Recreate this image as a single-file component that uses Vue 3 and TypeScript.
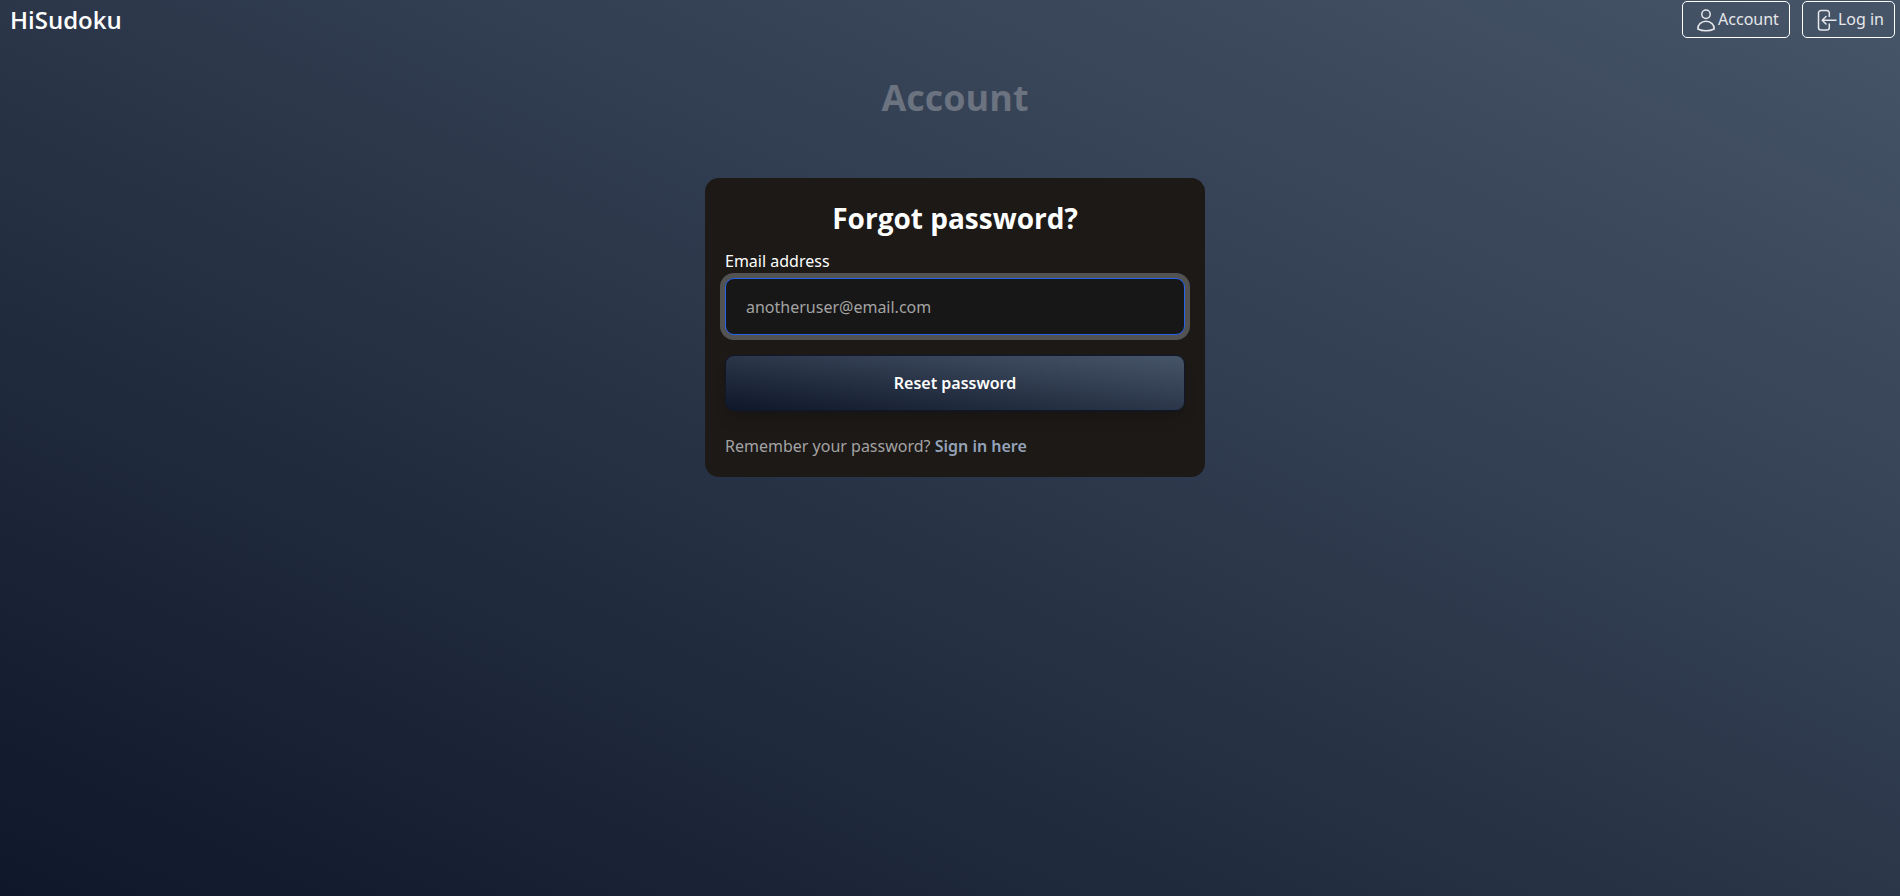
<script setup lang="ts">
import { ref } from 'vue'

const email = ref<string>('')

function resetPassword(): void {
  email.value = email.value.trim()
}
</script>

<template>
  <div class="page">
    <header class="bar">
      <a class="brand" href="#home">HiSudoku</a>
      <nav class="actions">
        <button type="button" class="nav-button">
          <svg class="icon" viewBox="0 0 24 24" aria-hidden="true">
            <circle cx="12" cy="6.2" r="4.2" />
            <path d="M3.800 21C3.600 17 7 13.300 12 13.300s8.400 3.700 8.200 7.700C17.700 22.200 15 22.800 12 22.800s-5.700-.6-8.200-1.800z" />
          </svg>
          Account
        </button>
        <button type="button" class="nav-button">
          <svg class="icon" viewBox="0 0 24 24" aria-hidden="true">
            <path d="M15.300 8.500V5A2.500 2.500 0 0 0 12.800 2.500H7A2.500 2.500 0 0 0 4.500 5v14.500A2.500 2.500 0 0 0 7 22h5.800a2.500 2.500 0 0 0 2.500-2.500V16" />
            <path d="M22 12.300H8.500M12 8.500l-3.800 3.800L12 16" />
          </svg>
          Log in
        </button>
      </nav>
    </header>

    <main class="content">
      <h1 class="title">Account</h1>
      <section class="card">
        <h2 class="heading">Forgot password?</h2>
        <form class="form" @submit.prevent="resetPassword">
          <label class="label" for="email">Email address</label>
          <input id="email" v-model="email" class="field" type="email" placeholder="anotheruser@email.com" />
          <button type="submit" class="submit">Reset password</button>
        </form>
        <p class="hint">Remember your password? <a class="link" href="#login">Sign in here</a></p>
      </section>
    </main>
  </div>
</template>

<style>
body {
  margin: 0;
}
</style>

<style scoped>
.page {
  min-height: 100vh;
  box-sizing: border-box;
  background: linear-gradient(to top right, #0f172a, #475569);
  color: #fff;
  font-family: "Segoe UI", "Noto Sans", "Open Sans", sans-serif;
  font-size: 16px;
  line-height: 26px;
}

.bar {
  display: flex;
  align-items: center;
  justify-content: space-between;
  padding: 1px 5px 0 10px;
}

.brand {
  color: #fff;
  font-family: "Segoe UI", "Open Sans", sans-serif;
  font-size: 24px;
  font-weight: 600;
  text-decoration: none;
}

.actions {
  display: flex;
  gap: 12px;
}

.nav-button {
  display: flex;
  align-items: center;
  padding: 5px 10px 5px 11px;
  border: 1px solid #fff;
  border-radius: 5px;
  background: transparent;
  color: #e5e7eb;
  font: inherit;
  line-height: 25px;
}

.icon {
  width: 24px;
  height: 24px;
  fill: none;
  stroke: currentColor;
  stroke-width: 1.5;
  stroke-linecap: round;
  stroke-linejoin: round;
}

.content {
  display: flex;
  flex-direction: column;
  align-items: center;
  padding: 36px 0 36px 10px;
}

.title {
  margin: 0 0 56px;
  color: #6b7280;
  font-family: "Segoe UI", "Open Sans", sans-serif;
  font-size: 36px;
  font-weight: 700;
  line-height: 48px;
}

.card {
  box-sizing: border-box;
  width: 100%;
  max-width: 500px;
  padding: 20px 20px 18px;
  border-radius: 14px;
  background: #1c1917;
}

.heading {
  margin: 0 0 10px;
  font-family: "Segoe UI", "Open Sans", sans-serif;
  font-size: 28px;
  font-weight: 700;
  line-height: 40px;
  text-align: center;
}

.form {
  display: flex;
  flex-direction: column;
}

.label {
  margin-bottom: 4px;
}

.field {
  box-sizing: border-box;
  height: 57px;
  padding: 0 20px;
  border: 1px solid #2563eb;
  border-radius: 9px;
  outline: none;
  background: #171717;
  box-shadow: 0 0 0 5px #525252;
  color: #e5e5e5;
  font: inherit;
}

.field::placeholder {
  color: #a3a3a3;
  opacity: 1;
}

.submit {
  height: 56px;
  margin-top: 20px;
  border: 1px solid #0f172a;
  border-radius: 9px;
  background: linear-gradient(to top right, #0f172a, #475569);
  box-shadow: 0 11px 16px -3px rgb(0 0 0 / 10%), 0 4px 7px -4px rgb(0 0 0 / 10%);
  color: #fff;
  font: inherit;
  font-weight: 600;
}

.hint {
  margin: 22px 0 0;
  color: #a3a3a3;
}

.link {
  color: #94a3b8;
  font-weight: 600;
  text-decoration: none;
}
</style>
